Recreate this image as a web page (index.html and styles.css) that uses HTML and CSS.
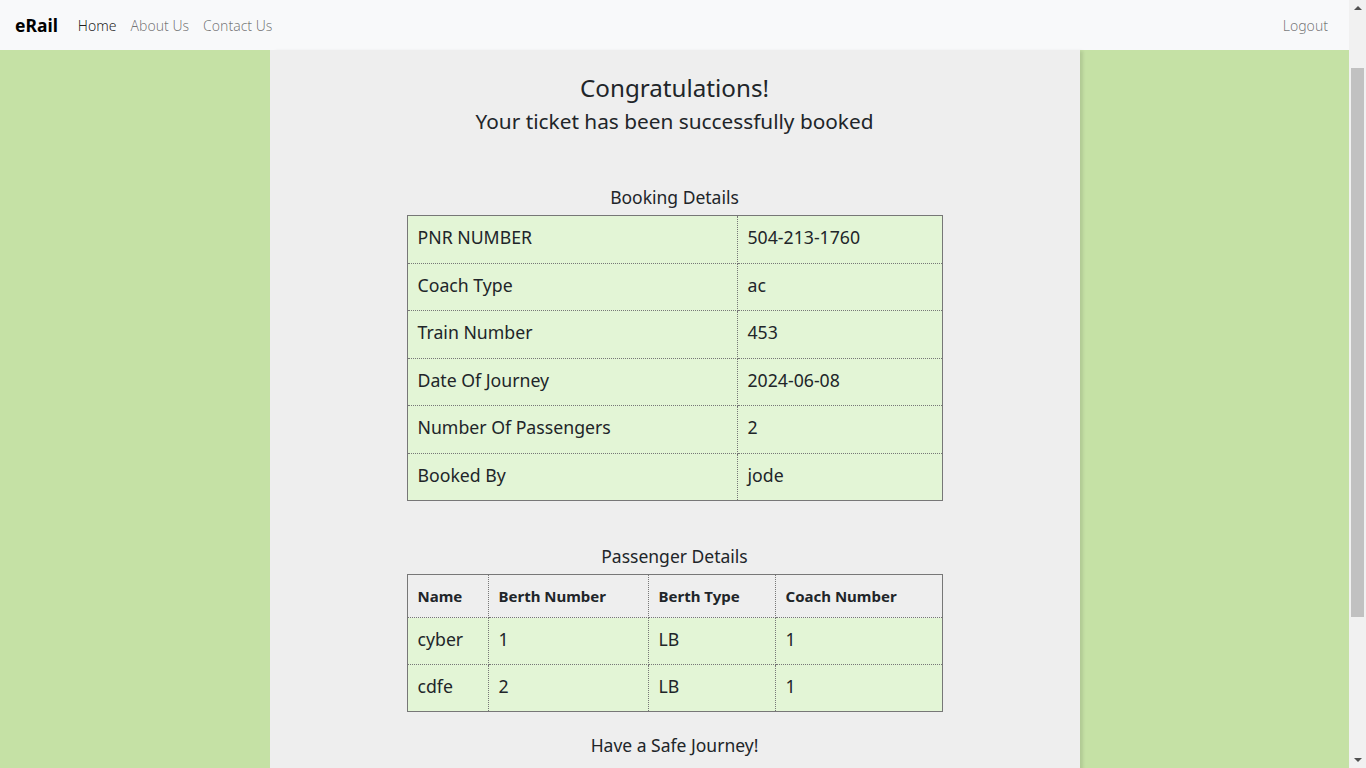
FILE: index.html
```html
<!DOCTYPE html>
<html lang="en">
<head>
<meta charset="utf-8">
<title>eRail - Booking Confirmed</title>
<link rel="stylesheet" href="styles.css">
</head>
<body>
<div class="page">
<nav class="navbar">
  <a class="brand" href="#">eRail</a>
  <ul class="nav-links">
    <li><a class="nav-link active" href="#">Home</a></li>
    <li><a class="nav-link" href="#">About Us</a></li>
    <li><a class="nav-link" href="#">Contact Us</a></li>
  </ul>
  <a class="nav-link logout" href="#">Logout</a>
</nav>
<main class="content">
  <h1 class="title">Congratulations!</h1>
  <h2 class="subtitle">Your ticket has been successfully booked</h2>

  <h3 class="section-title">Booking Details</h3>
  <table class="details booking">
    <colgroup><col class="c-label"><col class="c-value"></colgroup>
    <tbody>
      <tr><td>PNR NUMBER</td><td>504-213-1760</td></tr>
      <tr><td>Coach Type</td><td>ac</td></tr>
      <tr><td>Train Number</td><td>453</td></tr>
      <tr><td>Date Of Journey</td><td>2024-06-08</td></tr>
      <tr><td>Number Of Passengers</td><td>2</td></tr>
      <tr><td>Booked By</td><td>jode</td></tr>
    </tbody>
  </table>

  <h3 class="section-title passenger-title">Passenger Details</h3>
  <table class="details passengers">
    <colgroup><col class="c-name"><col class="c-berth"><col class="c-type"><col class="c-coach"></colgroup>
    <thead>
      <tr><th>Name</th><th>Berth Number</th><th>Berth Type</th><th>Coach Number</th></tr>
    </thead>
    <tbody>
      <tr><td>cyber</td><td>1</td><td>LB</td><td>1</td></tr>
      <tr><td>cdfe</td><td>2</td><td>LB</td><td>1</td></tr>
    </tbody>
  </table>

  <p class="farewell">Have a Safe Journey!</p>
</main>
</div>
<div class="scrollbar" aria-hidden="true">
  <div class="sb-button"><span class="arrow-up"></span></div>
  <div class="sb-track"><div class="sb-thumb"></div></div>
  <div class="sb-button"><span class="arrow-down"></span></div>
</div>
</body>
</html>
```
FILE: styles.css
```css
html, body {
  height: 100%;
  margin: 0;
  overflow: hidden;
}
body {
  display: flex;
  background: #c5e1a5;
  font-family: "Noto Sans", "Open Sans", sans-serif;
  color: #212529;
}
.page {
  flex: 1;
  min-width: 0;
  height: 100%;
  overflow: hidden;
}
.scrollbar {
  width: 17px;
  flex: none;
  display: flex;
  flex-direction: column;
  background: #f1f1f1;
}
.sb-button {
  height: 17px;
  flex: none;
  display: flex;
  align-items: center;
  justify-content: center;
}
.arrow-up {
  width: 0;
  height: 0;
  border-left: 4px solid transparent;
  border-right: 4px solid transparent;
  border-bottom: 4px solid #505050;
  margin-top: -1px;
}
.arrow-down {
  width: 0;
  height: 0;
  border-left: 4px solid transparent;
  border-right: 4px solid transparent;
  border-top: 4px solid #505050;
  margin-top: 1px;
}
.sb-track {
  flex: 1;
  padding: 51px 2px 0;
}
.sb-thumb {
  height: 549px;
  background: #c1c1c1;
}
.navbar {
  height: 50px;
  background: #f8f9fa;
  display: flex;
  align-items: center;
  padding: 0 21px 0 15px;
}
.brand {
  font-size: 17.5px;
  font-weight: 700;
  color: #000;
  text-decoration: none;
  margin-right: 13px;
}
.nav-links {
  list-style: none;
  display: flex;
  margin: 0;
  padding: 0;
  flex: 1;
}
.nav-link {
  display: block;
  padding: 0 7px;
  font-size: 14px;
  font-weight: 300;
  color: rgba(0, 0, 0, 0.55);
  text-decoration: none;
}
.nav-link.active {
  color: rgba(0, 0, 0, 0.9);
}
.logout {
  padding: 0;
}
.content {
  width: 810px;
  margin: 0 auto;
  min-height: 1000px;
  background: #eeeeee;
  box-shadow: 4px 0 3px -1px rgba(0, 0, 0, 0.1);
  padding-top: 21px;
  text-align: center;
  box-sizing: border-box;
}
.title {
  margin: 0;
  font-size: 24.2px;
  font-weight: 400;
  line-height: 34px;
}
.subtitle {
  margin: 1px 0 0;
  font-size: 20.8px;
  font-weight: 400;
  line-height: 30px;
}
.section-title {
  margin: 49px 0 6px;
  font-size: 17.5px;
  font-weight: 400;
  line-height: 24px;
}
.passenger-title {
  margin-top: 43px;
}
.details {
  margin: 0 auto;
  width: 535px;
  border-collapse: collapse;
  table-layout: fixed;
  border: 1px solid #777;
  text-align: left;
  font-size: 17.7px;
}
.details td,
.details th {
  border: 1px dotted #777;
  padding: 0 10px 3px;
  line-height: 43.5px;
  white-space: nowrap;
}
.details tbody td {
  background: #e3f5d6;
}
.details th {
  font-size: 15px;
  font-weight: 700;
  padding-bottom: 0;
  line-height: 42px;
}
.passengers td {
  line-height: 43px;
}
.c-label { width: 330px; }
.c-value { width: 205px; }
.c-name { width: 81px; }
.c-berth { width: 160px; }
.c-type { width: 127px; }
.c-coach { width: 167px; }
.farewell {
  margin: 21px 0 0;
  font-size: 17.5px;
  font-weight: 400;
  line-height: 24px;
}
```
